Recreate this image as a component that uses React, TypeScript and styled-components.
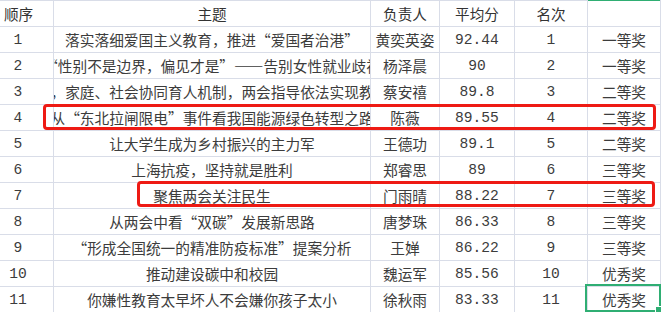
import styled, { createGlobalStyle } from "styled-components";

const GlobalStyle = createGlobalStyle`
  html, body {
    margin: 0;
    padding: 0;
    background: #ffffff;
  }
`;

const Sheet = styled.div`
  position: relative;
  width: 661px;
  height: 314px;
  overflow: hidden;
  background: #ffffff;
`;

const Grid = styled.div`
  display: grid;
  grid-template-columns: 53px 316px 68px 74px 72px 72px;
  grid-auto-rows: 25px;
  gap: 1px;
  background: #d9dde8;
  border-top: 1px solid #d9dde8;
  width: 661px;
`;

const Cell = styled.div<{ $kind?: "seq" | "topic" | "name" | "num" | "award" }>`
  display: flex;
  align-items: center;
  justify-content: center;
  overflow: hidden;
  white-space: nowrap;
  background: #ffffff;
  color: #3c3c3c;
  font-family: ${({ $kind }) =>
    $kind === "seq" || $kind === "num"
      ? '"Liberation Mono", monospace'
      : '"Noto Sans CJK SC", sans-serif'};
  font-size: ${({ $kind }) =>
    $kind === "seq" || $kind === "num" ? "14.6px" : "14.7px"};
  font-feature-settings: "fwid" 1;
  padding-right: ${({ $kind }) => ($kind === "seq" ? "17px" : "0")};
`;

const HeadCell = styled.div<{ $seq?: boolean; $selected?: boolean }>`
  display: flex;
  align-items: center;
  justify-content: center;
  background: #ffffff;
  color: #333333;
  font-family: "Noto Sans CJK SC", sans-serif;
  font-size: 14.6px;
  padding-right: ${({ $seq }) => ($seq ? "16px" : "0")};
  box-shadow: ${({ $selected }) => ($selected ? "0 -1px 0 #2fae73" : "none")};
`;

const Highlight = styled.div<{ $top: number; $left: number; $width: number }>`
  position: absolute;
  top: ${({ $top }) => $top}px;
  left: ${({ $left }) => $left}px;
  width: ${({ $width }) => $width}px;
  height: 26px;
  box-sizing: border-box;
  border: 3px solid #ee1a14;
  border-radius: 4px;
  pointer-events: none;
`;

const Selection = styled.div`
  position: absolute;
  top: 284px;
  left: 585px;
  width: 76px;
  height: 28px;
  box-sizing: border-box;
  border: 2px solid #2fae73;
  pointer-events: none;
`;

const Handle = styled.span`
  position: absolute;
  right: -3px;
  bottom: -3px;
  width: 5px;
  height: 5px;
  background: #2fae73;
  border: 1px solid #ffffff;
`;

const rows = [
  ["1", "落实落细爱国主义教育，推进“爱国者治港”", "黄奕英姿", "92.44", "1", "一等奖"],
  ["2", "“性别不是边界，偏见才是”——告别女性就业歧视", "杨泽晨", "90", "2", "一等奖"],
  ["3", "校，家庭、社会协同育人机制，两会指导依法实现教育", "蔡安禧", "89.8", "3", "二等奖"],
  ["4", "从“东北拉闸限电”事件看我国能源绿色转型之路", "陈薇", "89.55", "4", "二等奖"],
  ["5", "让大学生成为乡村振兴的主力军", "王德功", "89.1", "5", "二等奖"],
  ["6", "上海抗疫，坚持就是胜利", "郑睿思", "89", "6", "三等奖"],
  ["7", "聚焦两会关注民生", "门雨晴", "88.22", "7", "三等奖"],
  ["8", "从两会中看“双碳”发展新思路", "唐梦珠", "86.33", "8", "三等奖"],
  ["9", "“形成全国统一的精准防疫标准”提案分析", "王婵", "86.22", "9", "三等奖"],
  ["10", "推动建设碳中和校园", "魏运军", "85.56", "10", "优秀奖"],
  ["11", "你嫌性教育太早坏人不会嫌你孩子太小", "徐秋雨", "83.33", "11", "优秀奖"],
];

export default function App() {
  return (
    <Sheet>
      <GlobalStyle />
      <Grid>
        <HeadCell $seq>顺序</HeadCell>
        <HeadCell>主题</HeadCell>
        <HeadCell>负责人</HeadCell>
        <HeadCell>平均分</HeadCell>
        <HeadCell>名次</HeadCell>
        <HeadCell $selected />
        {rows.map(([seq, topic, name, score, rank, award]) => (
          <>
            <Cell key={seq + "a"} $kind="seq">{seq}</Cell>
            <Cell key={seq + "b"} $kind="topic">{topic}</Cell>
            <Cell key={seq + "c"} $kind="name">{name}</Cell>
            <Cell key={seq + "d"} $kind="num">{score}</Cell>
            <Cell key={seq + "e"} $kind="num">{rank}</Cell>
            <Cell key={seq + "f"} $kind="award">{award}</Cell>
          </>
        ))}
      </Grid>
      <Highlight $top={104} $left={43} $width={613} />
      <Highlight $top={181} $left={137} $width={518} />
      <Selection>
        <Handle />
      </Selection>
    </Sheet>
  );
}
